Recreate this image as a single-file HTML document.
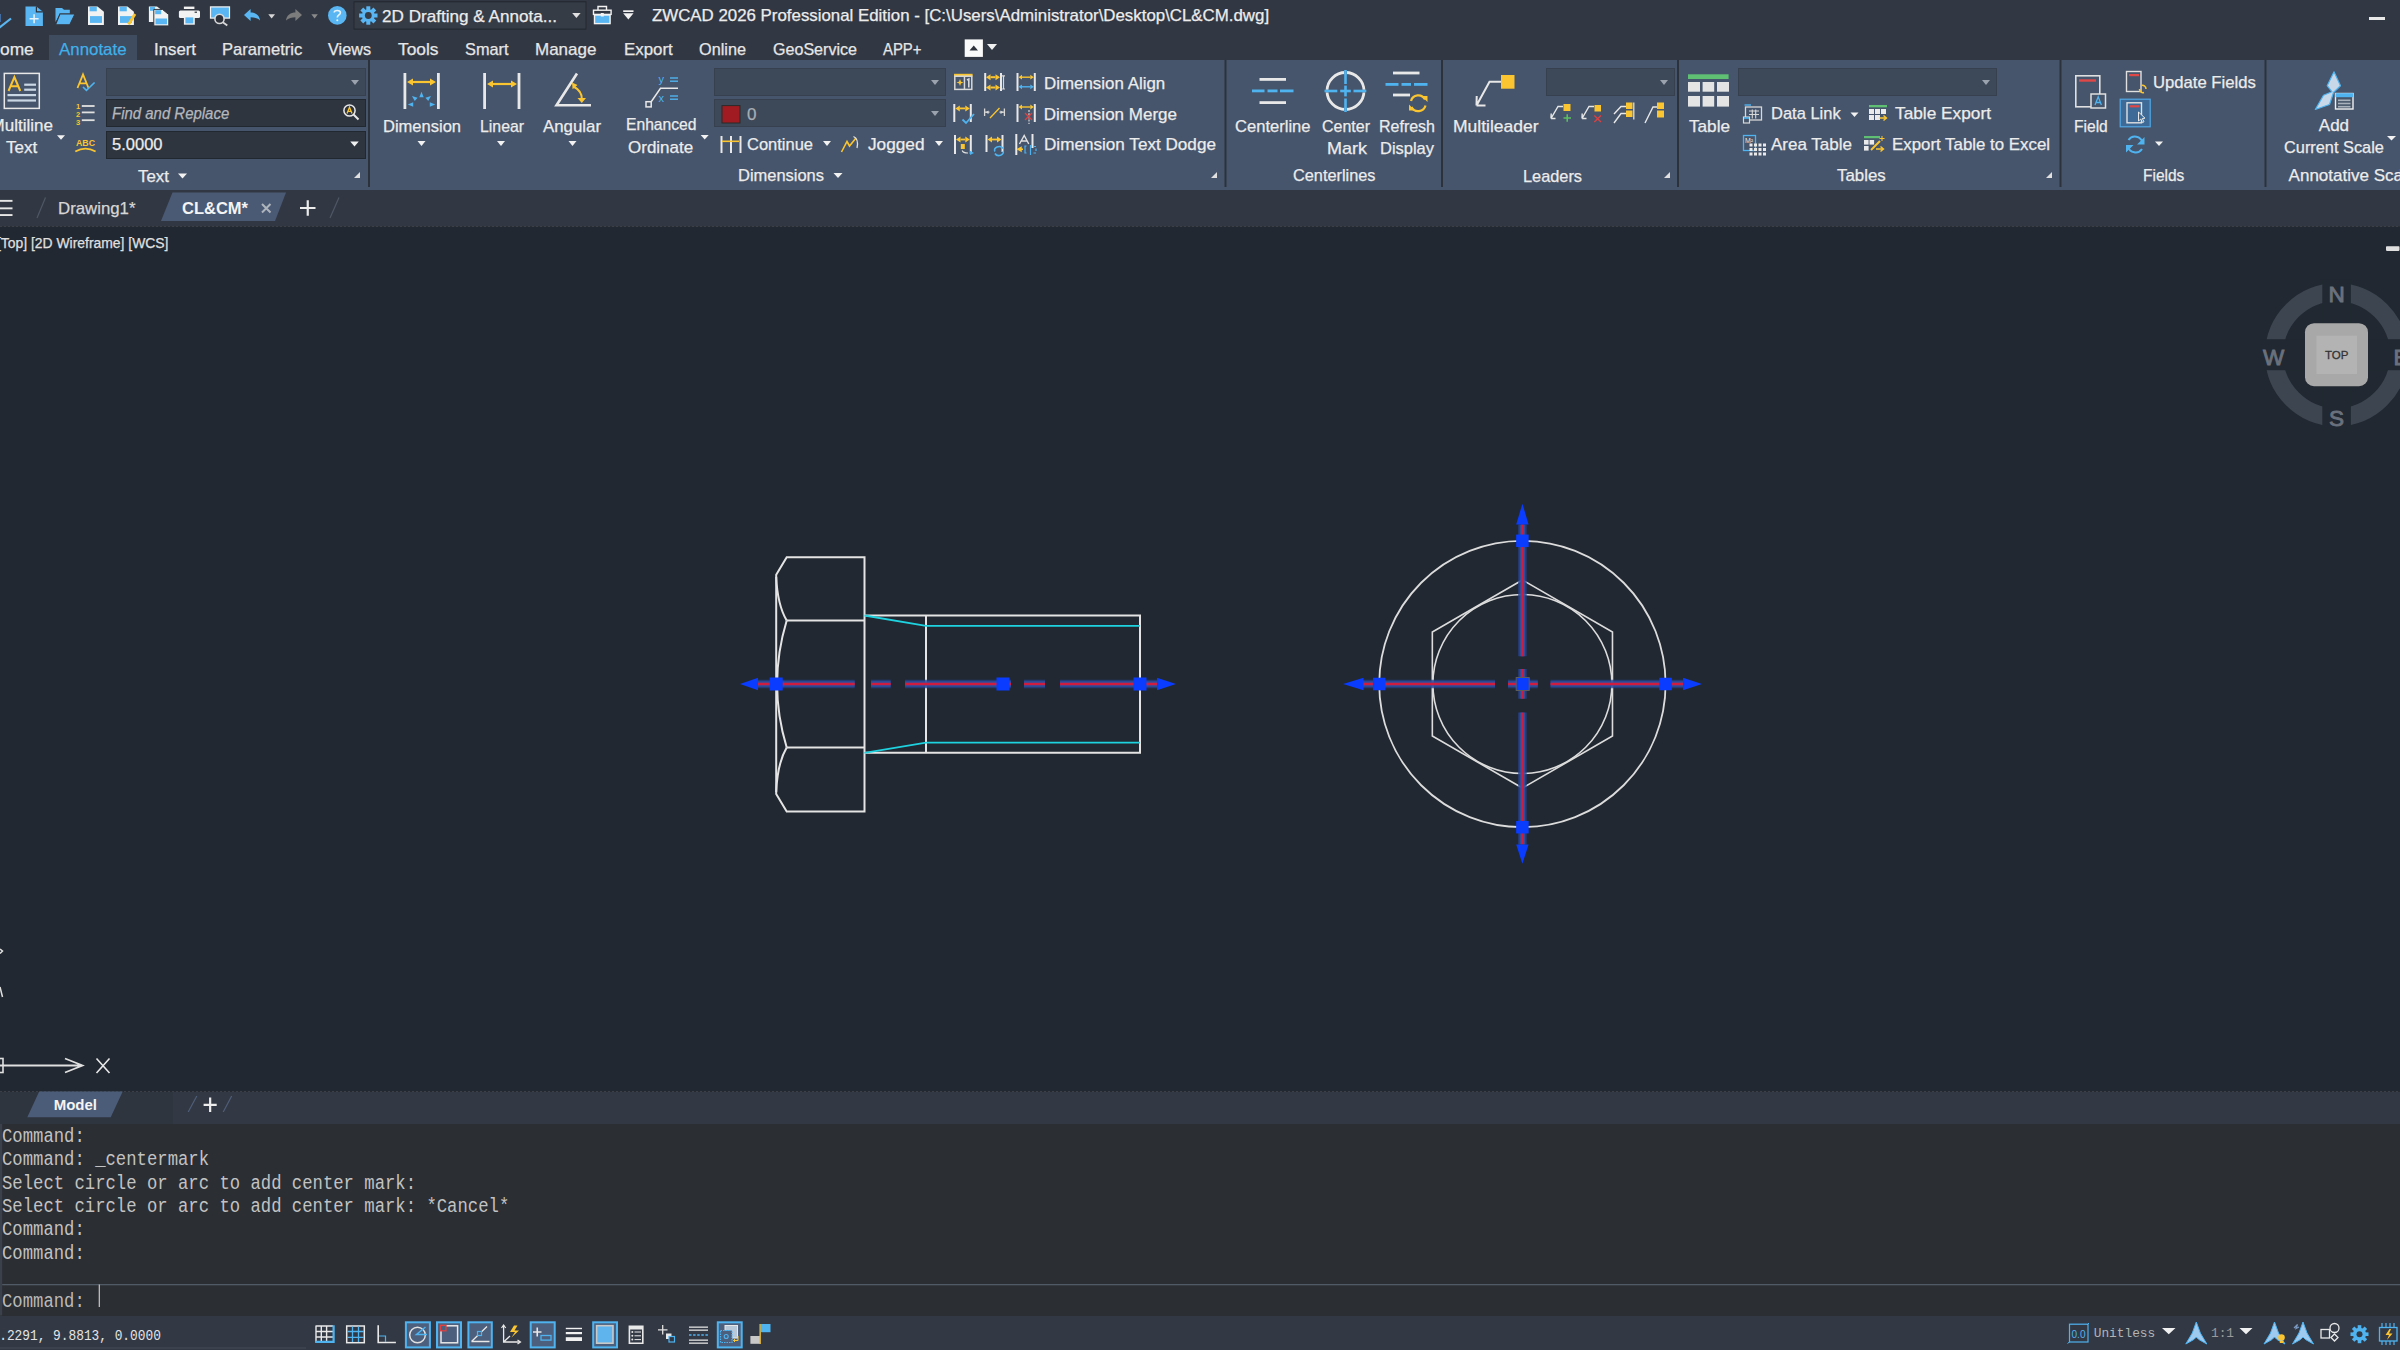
<!DOCTYPE html>
<html><head><meta charset="utf-8"><style>
html,body{margin:0;padding:0;width:2400px;height:1350px;overflow:hidden;background:#212831;}
body{position:relative;font-family:"Liberation Sans",sans-serif;}
body>div,body>svg{position:absolute;white-space:nowrap;}
</style></head><body>
<div style="left:0px;top:0px;width:2400px;height:60px;background:#323843;"></div>
<div style="left:0px;top:60px;width:2400px;height:130px;background:#46556b;"></div>
<div style="left:0px;top:190px;width:2400px;height:37px;background:#323843;"></div>
<div style="left:0px;top:227px;width:2400px;height:865px;background:#212831;"></div>
<div style="left:0px;top:1092px;width:2400px;height:32px;background:#323944;"></div>
<div style="left:0px;top:1124px;width:2400px;height:192px;background:#2b2e33;"></div>
<div style="left:0px;top:1316px;width:2400px;height:34px;background:#323945;"></div>
<svg style="left:0px;top:0px;" width="660" height="32" viewBox="0 0 660 32"><path d="M-1 28 L11 18.5" stroke="#5ab6f2" stroke-width="2.2" fill="none"/><path d="M0 14 L0 22" stroke="#4a7fc0" stroke-width="1.5"/><path d="M25.5 6.4 H36.4 L42.9 11.8 V26.1 H25.5 Z" fill="#5ab6f2"/><path d="M36.4 6.4 V11.8 H42.9" stroke="#2d323b" stroke-width="1.2" fill="none"/><path d="M29.6 18.75 H38.6 M34.1 14.3 V23.2" stroke="#e8f4fc" stroke-width="1.5"/><path d="M55.5 7.9 H62 L64 9.8 H69.8 V13.9 H60 L55.5 22 Z" fill="#5ab6f2"/><path d="M55.5 24.75 L60 13.9 H75 L69.8 24.75 Z" fill="#5ab6f2" stroke="#323843" stroke-width="1.1"/><path d="M88 6.4 H97.5 L103.9 11.8 V25.1 H88 Z" fill="#f2f2f2"/><rect x="89.6" y="6.8" width="7.2" height="4.5" fill="#5ab6f2"/><rect x="90" y="16.1" width="12" height="6.8" fill="#5ab6f2"/><path d="M118 6.4 H127.5 L133.9 11.8 V25.1 H118 Z" fill="#f2f2f2"/><rect x="119.6" y="6.8" width="7.2" height="4.5" fill="#5ab6f2"/><rect x="120" y="16.1" width="12" height="6.8" fill="#5ab6f2"/><path d="M128.6 24.5 L135 14" stroke="#fac530" stroke-width="2.8"/><path d="M148.9 6.4 H157 L161 9.5 V22 H148.9 Z" fill="#f2f2f2"/><rect x="150" y="6.8" width="5" height="4" fill="#5ab6f2"/><path d="M153.8 9.4 H162.5 L168.8 14.6 V25.9 H153.8 Z" fill="#f2f2f2" stroke="#2d323b" stroke-width="1"/><rect x="155.2" y="10.2" width="6" height="4" fill="#5ab6f2"/><rect x="155.5" y="18.5" width="11.5" height="5.8" fill="#5ab6f2"/><rect x="183.9" y="6.6" width="10.5" height="2.4" fill="#f2f2f2"/><rect x="178.9" y="10.5" width="21.1" height="7.6" rx="1.5" fill="#f2f2f2"/><rect x="183.9" y="16.1" width="10.9" height="8.6" fill="#f2f2f2"/><rect x="185.4" y="17.4" width="7.9" height="6" fill="#5ab6f2"/><rect x="194.6" y="11.6" width="2.4" height="1.2" fill="#2d323b"/><rect x="210.5" y="6.9" width="19" height="11.2" fill="#5ab6f2" stroke="#f2f2f2" stroke-width="1.2"/><circle cx="219.5" cy="18.9" r="4.6" fill="#2d323b" stroke="#d8d8d8" stroke-width="1.6"/><path d="M222.8 22.2 L227.3 25.5" stroke="#d8d8d8" stroke-width="1.8"/><path d="M244 15 L250.6 9 V12.5 C255 12.5 259.5 15 260 20.6 C257.5 18 254 17.3 250.6 17.3 V21 Z" fill="#5ab6f2"/><path d="M268.3 14.3 H275 L271.65 18.4 Z" fill="#d6d6d6"/><path d="M302 15 L295.4 9 V12.5 C291 12.5 286.5 15 286 20.6 C288.5 18 292 17.3 295.4 17.3 V21 Z" fill="#7c7c7c"/><path d="M311.4 14.3 H317.8 L314.6 18.4 Z" fill="#8a8a8a"/><circle cx="337.3" cy="15.4" r="9.3" fill="#5ab6f2"/><path d="M334.2 12.6 C334.2 9.8 340.4 9.6 340.4 12.7 C340.4 14.8 337.3 15 337.3 17.4" stroke="#e8f4fc" stroke-width="1.6" fill="none"/><circle cx="337.3" cy="20.2" r="1" fill="#e8f4fc"/><rect x="354" y="1.8" width="232" height="27.3" fill="#363c46" stroke="#22272e" stroke-width="1"/><g transform="translate(368.3 15.5)" fill="#5ab6f2"><rect x="-2" y="-9.2" width="4" height="5" transform="rotate(0)"/><rect x="-2" y="-9.2" width="4" height="5" transform="rotate(45)"/><rect x="-2" y="-9.2" width="4" height="5" transform="rotate(90)"/><rect x="-2" y="-9.2" width="4" height="5" transform="rotate(135)"/><rect x="-2" y="-9.2" width="4" height="5" transform="rotate(180)"/><rect x="-2" y="-9.2" width="4" height="5" transform="rotate(225)"/><rect x="-2" y="-9.2" width="4" height="5" transform="rotate(270)"/><rect x="-2" y="-9.2" width="4" height="5" transform="rotate(315)"/><circle r="6.3"/></g><circle cx="368.3" cy="15.5" r="3.4" fill="#363c46"/><path d="M572.2 12.9 H580.6 L576.4 18.1 Z" fill="#e0e0e0"/><path d="M598 10 V6.5 H606.5 V10" stroke="#f2f2f2" stroke-width="1.4" fill="none"/><rect x="593.5" y="10.2" width="17.6" height="4.2" fill="none" stroke="#f2f2f2" stroke-width="1.4"/><rect x="594.5" y="15" width="15.6" height="8.6" fill="#5ab6f2" stroke="#f2f2f2" stroke-width="1.4"/><rect x="600.8" y="13" width="3" height="3.5" fill="#f2f2f2"/><rect x="623.2" y="10.3" width="10.3" height="1.7" fill="#f2f2f2"/><path d="M623.2 13.2 H633.5 L628.35 19.4 Z" fill="#f2f2f2"/></svg>
<div style="left:382.30px;top:7.61px;font-size:17px;line-height:17px;color:#ececec;font-family:'Liberation Sans',sans-serif;-webkit-text-stroke:0.25px #ececec;transform:scaleX(1.0067);transform-origin:0 0;">2D Drafting &amp; Annota...</div>
<div style="left:651.75px;top:6.81px;font-size:17px;line-height:17px;color:#ececec;font-family:'Liberation Sans',sans-serif;-webkit-text-stroke:0.25px #ececec;transform:scaleX(0.9911);transform-origin:0 0;">ZWCAD 2026 Professional Edition - [C:\Users\Administrator\Desktop\CL&amp;CM.dwg]</div>
<div style="left:2368.5px;top:17px;width:16px;height:3px;background:#e8e8e8;"></div>
<div style="left:49px;top:35px;width:88px;height:25px;background:#3f4b5e;"></div>
<div style="left:0.00px;top:40.61px;font-size:17px;line-height:17px;color:#e6e6e6;font-family:'Liberation Sans',sans-serif;-webkit-text-stroke:0.25px #e6e6e6;transform:scaleX(1.0208);transform-origin:0 0;">ome</div>
<div style="left:59.25px;top:40.61px;font-size:17px;line-height:17px;color:#3fb0ea;font-family:'Liberation Sans',sans-serif;-webkit-text-stroke:0.25px #3fb0ea;transform:scaleX(0.9920);transform-origin:0 0;">Annotate</div>
<div style="left:153.75px;top:40.61px;font-size:17px;line-height:17px;color:#e6e6e6;font-family:'Liberation Sans',sans-serif;-webkit-text-stroke:0.25px #e6e6e6;transform:scaleX(0.9882);transform-origin:0 0;">Insert</div>
<div style="left:222.00px;top:40.61px;font-size:17px;line-height:17px;color:#e6e6e6;font-family:'Liberation Sans',sans-serif;-webkit-text-stroke:0.25px #e6e6e6;transform:scaleX(0.9766);transform-origin:0 0;">Parametric</div>
<div style="left:327.75px;top:40.61px;font-size:17px;line-height:17px;color:#e6e6e6;font-family:'Liberation Sans',sans-serif;-webkit-text-stroke:0.25px #e6e6e6;transform:scaleX(0.9546);transform-origin:0 0;">Views</div>
<div style="left:397.75px;top:40.61px;font-size:17px;line-height:17px;color:#e6e6e6;font-family:'Liberation Sans',sans-serif;-webkit-text-stroke:0.25px #e6e6e6;transform:scaleX(1.0205);transform-origin:0 0;">Tools</div>
<div style="left:465.25px;top:40.61px;font-size:17px;line-height:17px;color:#e6e6e6;font-family:'Liberation Sans',sans-serif;-webkit-text-stroke:0.25px #e6e6e6;transform:scaleX(0.9597);transform-origin:0 0;">Smart</div>
<div style="left:535.00px;top:40.61px;font-size:17px;line-height:17px;color:#e6e6e6;font-family:'Liberation Sans',sans-serif;-webkit-text-stroke:0.25px #e6e6e6;">Manage</div>
<div style="left:623.50px;top:40.61px;font-size:17px;line-height:17px;color:#e6e6e6;font-family:'Liberation Sans',sans-serif;-webkit-text-stroke:0.25px #e6e6e6;transform:scaleX(0.9924);transform-origin:0 0;">Export</div>
<div style="left:699.00px;top:40.61px;font-size:17px;line-height:17px;color:#e6e6e6;font-family:'Liberation Sans',sans-serif;-webkit-text-stroke:0.25px #e6e6e6;transform:scaleX(0.9564);transform-origin:0 0;">Online</div>
<div style="left:772.50px;top:40.61px;font-size:17px;line-height:17px;color:#e6e6e6;font-family:'Liberation Sans',sans-serif;-webkit-text-stroke:0.25px #e6e6e6;transform:scaleX(0.9458);transform-origin:0 0;">GeoService</div>
<div style="left:882.80px;top:40.61px;font-size:17px;line-height:17px;color:#e6e6e6;font-family:'Liberation Sans',sans-serif;-webkit-text-stroke:0.25px #e6e6e6;transform:scaleX(0.8759);transform-origin:0 0;">APP+</div>
<svg style="left:960px;top:36px;" width="42" height="24" viewBox="0 0 42 24"><rect x="4.7" y="3.4" width="18.2" height="17.5" fill="#fafafa"/><path d="M9.5 14.6 H18 L13.75 9.6 Z" fill="#2d323b"/><path d="M27 8 H37 L32 14 Z" fill="#f0f0f0"/></svg>
<svg style="left:0px;top:0px;" width="2400" height="190" viewBox="0 0 2400 190"><rect x="368" y="60" width="2" height="127" fill="#2b323c"/><rect x="1224.5" y="60" width="2" height="127" fill="#2b323c"/><rect x="1441" y="60" width="2" height="127" fill="#2b323c"/><rect x="1677" y="60" width="2" height="127" fill="#2b323c"/><rect x="2059.5" y="60" width="2" height="127" fill="#2b323c"/><rect x="2264.5" y="60" width="2" height="127" fill="#2b323c"/><path d="M354 178 H360 V172 Z" fill="#e0e0e0"/><path d="M1211 178 H1217 V172 Z" fill="#e0e0e0"/><path d="M1664 178 H1670 V172 Z" fill="#e0e0e0"/><path d="M2046 178 H2052 V172 Z" fill="#e0e0e0"/><rect x="4.3" y="73.4" width="35" height="35" fill="none" stroke="#e8e8e8" stroke-width="1.5"/><path d="M8.5 91 L14.4 77 L20.3 91 M10.5 86.2 H18.3" stroke="#fac530" stroke-width="2" fill="none"/><rect x="24.2" y="83.6" width="11.8" height="2.2" fill="#c9d6e4"/><rect x="24.2" y="88.6" width="11.8" height="2.2" fill="#c9d6e4"/><rect x="7.5" y="94" width="28.5" height="2.2" fill="#c9d6e4"/><rect x="7.5" y="99.4" width="28.5" height="2.2" fill="#c9d6e4"/><path d="M57.0 135.2 H65.0 L61 139.7 Z" fill="#f2f2f2"/><path d="M77.5 88 L83 74.3 L88.5 88 M79.5 83.3 H86.5" stroke="#fac530" stroke-width="1.8" fill="none"/><path d="M83 87 L86.4 90.3 L94.6 82.5" stroke="#4fb3f0" stroke-width="1.7" fill="none"/><text x="76" y="109" font-family="Liberation Sans" font-weight="bold" font-size="7.5" fill="#fac530">1</text><text x="76" y="117" font-family="Liberation Sans" font-weight="bold" font-size="7.5" fill="#fac530">2</text><text x="76" y="125" font-family="Liberation Sans" font-weight="bold" font-size="7.5" fill="#fac530">3</text><rect x="81.8" y="105.1" width="12.8" height="1.8" fill="#e0e0e0"/><rect x="81.8" y="111.5" width="12.8" height="1.8" fill="#e0e0e0"/><rect x="81.8" y="119.3" width="12.8" height="1.8" fill="#e0e0e0"/><text x="76" y="146" font-family="Liberation Sans" font-weight="bold" font-size="8.6" fill="#fac530" textLength="19" lengthAdjust="spacingAndGlyphs">ABC</text><path d="M75.3 151.6 Q85.5 145.5 95.6 151.6" stroke="#fac530" stroke-width="1.8" fill="none"/><rect x="106.5" y="68.5" width="259" height="27" fill="#3d4858" stroke="#36404e" stroke-width="1"/><path d="M351.0 80.0 H359.0 L355 85.0 Z" fill="#9aa3ae"/><rect x="106.5" y="99.5" width="259" height="27" fill="#2f353f" stroke="#222830" stroke-width="1"/><rect x="106.5" y="131.5" width="259" height="27" fill="#2f353f" stroke="#222830" stroke-width="1"/><path d="M350.25 141.5 H358.75 L354.5 146.5 Z" fill="#f0f0f0"/><circle cx="349.5" cy="110.5" r="5.6" fill="none" stroke="#e8e8e8" stroke-width="1.5"/><path d="M353.5 114.5 L358.5 119.5" stroke="#e8e8e8" stroke-width="2"/><path d="M347 113.5 L349.5 107.2 L352 113.5 M347.9 111.4 H351.1" stroke="#fac530" stroke-width="1.3" fill="none"/><rect x="403.5" y="73" width="2.8" height="36" fill="#e8e8e8"/><rect x="437" y="73" width="2.8" height="36" fill="#e8e8e8"/><path d="M413 80.9 H430 V83.1 H413 Z" fill="#fac530"/><path d="M407 82 L413 78.4 V85.6 Z M436 82 L430 78.4 V85.6 Z" fill="#fac530"/><path d="M0 -3.3 L2.2 2.2 H-2.2 Z" fill="#4fb3f0" transform="translate(421.5 95) rotate(0)"/><path d="M0 -3.3 L2.2 2.2 H-2.2 Z" fill="#4fb3f0" transform="translate(414.5 98) rotate(-50)"/><path d="M0 -3.3 L2.2 2.2 H-2.2 Z" fill="#4fb3f0" transform="translate(428.5 98) rotate(50)"/><path d="M0 -3.3 L2.2 2.2 H-2.2 Z" fill="#4fb3f0" transform="translate(411 104.5) rotate(-90)"/><path d="M0 -3.3 L2.2 2.2 H-2.2 Z" fill="#4fb3f0" transform="translate(432 104.5) rotate(90)"/><path d="M417.5 141 H425.5 L421.5 146 Z" fill="#f2f2f2"/><rect x="483.2" y="73" width="2.8" height="36" fill="#e8e8e8"/><rect x="517.6" y="73" width="2.8" height="36" fill="#e8e8e8"/><path d="M493 82.9 H511 V85.1 H493 Z" fill="#fac530"/><path d="M487 84 L493 80.4 V87.6 Z M517 84 L511 80.4 V87.6 Z" fill="#fac530"/><path d="M497.0 141 H505.0 L501 146 Z" fill="#f2f2f2"/><path d="M577 73.5 L556.5 105.2 H591" stroke="#e8e8e8" stroke-width="2.6" fill="none"/><path d="M573.5 86.5 Q582 91 581.8 99" stroke="#fac530" stroke-width="2" fill="none"/><path d="M572 82.5 L577.5 85 L572.6 89.2 Z M577.5 98 H586 L581.8 103 Z" fill="#fac530"/><path d="M568.5 141 H576.5 L572.5 146 Z" fill="#f2f2f2"/><rect x="646" y="101.7" width="5.2" height="5.2" fill="none" stroke="#e8e8e8" stroke-width="1.5"/><path d="M651.2 101.7 L660.5 88.3 H678" stroke="#e8e8e8" stroke-width="1.5" fill="none"/><text x="658.5" y="82.5" font-family="Liberation Sans" font-size="11" fill="#4fb3f0">y</text><text x="658.5" y="101.5" font-family="Liberation Sans" font-size="11" fill="#4fb3f0">x</text><rect x="670" y="77.3" width="8" height="1.4" fill="#4fb3f0"/><rect x="670" y="80.5" width="8" height="1.4" fill="#4fb3f0"/><rect x="670" y="95.3" width="8" height="1.4" fill="#4fb3f0"/><rect x="670" y="98.5" width="8" height="1.4" fill="#4fb3f0"/><rect x="714.5" y="68.5" width="231" height="27" fill="#3d4858" stroke="#36404e" stroke-width="1"/><path d="M931.0 80.0 H939.0 L935 85.0 Z" fill="#9aa3ae"/><rect x="714.5" y="99.5" width="231" height="27" fill="#3d4858" stroke="#36404e" stroke-width="1"/><path d="M931.0 111.0 H939.0 L935 116.0 Z" fill="#9aa3ae"/><rect x="722" y="105.6" width="18" height="17.4" fill="#a01c22" stroke="#2a2a2a" stroke-width="1"/><path d="M700.7 135 H708.7 L704.7 139.5 Z" fill="#f2f2f2"/><rect x="720.5" y="136" width="2" height="17" fill="#e8e8e8"/><rect x="730" y="136" width="2" height="17" fill="#e8e8e8"/><rect x="739.5" y="136" width="2" height="17" fill="#e8e8e8"/><rect x="722" y="140.5" width="17" height="1.6" fill="#fac530"/><path d="M823.0 141 H831.0 L827 146 Z" fill="#f2f2f2"/><path d="M841.5 152 L847 141.5 L849.5 146 L856 138" stroke="#fac530" stroke-width="1.6" fill="none"/><path d="M853.5 136.5 Q859 139 857 148" stroke="#e0e0e0" stroke-width="1.3" fill="none"/><path d="M935.0 141 H943.0 L939 146 Z" fill="#f2f2f2"/><rect x="954" y="73.8" width="18.6" height="2.8" fill="#fac530"/><rect x="954.8" y="76.2" width="17" height="13.2" fill="none" stroke="#d8d8d8" stroke-width="1.5"/><rect x="963.7" y="76.5" width="1.5" height="13" fill="#d8d8d8"/><path d="M960 79 L961.3 82.5 L960 86 L958.7 82.5 Z M956.5 82.5 L960 81.2 L963.5 82.5 L960 83.8 Z" fill="#fac530"/><path d="M967 80 L968.8 79 V87.5" stroke="#d8d8d8" stroke-width="1.6" fill="none"/><rect x="984.2" y="73" width="2" height="18" fill="#e8e8e8"/><rect x="1000" y="73" width="2" height="18" fill="#e8e8e8"/><path d="M990.5 76.2 H995.5 V78.2 H990.5 Z" fill="#fac530"/><path d="M986 77.2 L990.5 74.2 V80.2 Z M1000 77.2 L995.5 74.2 V80.2 Z" fill="#fac530"/><path d="M990.5 86.5 H995.5 V88.5 H990.5 Z" fill="#fac530"/><path d="M986 87.5 L990.5 84.5 V90.5 Z M1000 87.5 L995.5 84.5 V90.5 Z" fill="#fac530"/><path d="M1002 75.8 H1005 M1003.5 75.8 V89 M1002 89 H1005" stroke="#d8d8d8" stroke-width="1.2" fill="none"/><rect x="1016.5" y="73" width="2" height="18" fill="#e8e8e8"/><rect x="1033.8" y="73" width="2" height="18" fill="#e8e8e8"/><path d="M1022.0 76.5 H1030.3 V77.9 H1022.0 Z" fill="#fac530"/><path d="M1018.5 77.2 L1022.0 74.8 V79.60000000000001 Z M1033.8 77.2 L1030.3 74.8 V79.60000000000001 Z" fill="#fac530"/><path d="M1022.0 86.1 H1030.3 V87.5 H1022.0 Z" fill="#4fb3f0"/><path d="M1018.5 86.8 L1022.0 84.39999999999999 V89.2 Z M1033.8 86.8 L1030.3 84.39999999999999 V89.2 Z" fill="#4fb3f0"/><rect x="953.3" y="104" width="2" height="18" fill="#e8e8e8"/><rect x="969.8" y="104" width="2" height="18" fill="#e8e8e8"/><path d="M959.8 107.5 H965.3 V109.30000000000001 H959.8 Z" fill="#fac530"/><path d="M955.3 108.4 L959.8 105.4 V111.4 Z M969.8 108.4 L965.3 105.4 V111.4 Z" fill="#fac530"/><path d="M962.5 119.5 L966 123 L974 114" stroke="#4fb3f0" stroke-width="1.8" fill="none"/><path d="M984.6 108.5 V116 M1004.4 108.5 V116 M985 112.2 H989.5 M999.5 112.2 H1004" stroke="#d8d8d8" stroke-width="1.3" fill="none"/><path d="M985.5 112.2 L988.5 110.5 V114 Z M1003.5 112.2 L1000.5 110.5 V114 Z" fill="#d8d8d8"/><path d="M990 118 L999.5 108" stroke="#fac530" stroke-width="1.3"/><rect x="1016.5" y="104" width="2" height="18" fill="#e8e8e8"/><rect x="1033.8" y="104" width="2" height="18" fill="#e8e8e8"/><path d="M1022.0 106.3 H1030.3 V107.7 H1022.0 Z" fill="#fac530"/><path d="M1018.5 107 L1022.0 104.6 V109.4 Z M1033.8 107 L1030.3 104.6 V109.4 Z" fill="#fac530"/><path d="M1029 110 V124" stroke="#d8d8d8" stroke-width="1.2" stroke-dasharray="2 1.2"/><path d="M1025 113 L1032 120 M1032 113 L1025 120" stroke="#e04040" stroke-width="1.3"/><rect x="954" y="135" width="2" height="19" fill="#e8e8e8"/><rect x="969.8" y="135" width="2" height="19" fill="#e8e8e8"/><path d="M960.5 138.6 H965.3 V140.4 H960.5 Z" fill="#fac530"/><path d="M956 139.5 L960.5 136.5 V142.5 Z M969.8 139.5 L965.3 136.5 V142.5 Z" fill="#fac530"/><rect x="960.8" y="144" width="4" height="5" fill="#fac530"/><path d="M962.2 150.5 Q963 153 968 153" stroke="#e0e0e0" stroke-width="1.2" fill="none"/><path d="M970 150.8 L974 153 L970 155 Z" fill="#4fb3f0"/><rect x="985.5" y="135" width="2" height="17" fill="#e8e8e8"/><rect x="1001.5" y="135" width="2" height="17" fill="#e8e8e8"/><path d="M992.0 138.6 H997.0 V140.4 H992.0 Z" fill="#fac530"/><path d="M987.5 139.5 L992.0 136.5 V142.5 Z M1001.5 139.5 L997.0 136.5 V142.5 Z" fill="#fac530"/><path d="M995 151.5 A4 3 0 0 1 1003 148.5 M1003 151 A4 3 0 0 1 995 153.5" stroke="#4fb3f0" stroke-width="1.6" fill="none"/><rect x="1015.3" y="134" width="2" height="21" fill="#e8e8e8"/><rect x="1031.5" y="134" width="2" height="14" fill="#e8e8e8"/><path d="M1019.5 144 L1024.2 135.5 L1028.8 144 M1021 141 H1027.3" stroke="#e0e0e0" stroke-width="1.4" fill="none"/><path d="M1018 149.2 H1023 M1018 149.2 L1021 147.5 V151 Z" stroke="#fac530" stroke-width="1.5" fill="#fac530"/><path d="M1026.5 146 H1025 V153 H1026.5 M1030.5 145 V155 M1033.5 146.5 H1036 M1033.5 153 H1036 M1036 148.5 V151" stroke="#4fb3f0" stroke-width="1.2" fill="none"/><rect x="1259.5" y="78" width="26.5" height="2.8" fill="#e8e8e8"/><rect x="1259.5" y="101.2" width="26.5" height="2.8" fill="#e8e8e8"/><rect x="1252" y="89.5" width="12.5" height="2.8" fill="#4fb3f0"/><rect x="1267.5" y="89.5" width="10.0" height="2.8" fill="#4fb3f0"/><rect x="1280" y="89.5" width="13.5" height="2.8" fill="#4fb3f0"/><circle cx="1345.5" cy="91" r="18.5" fill="none" stroke="#e8e8e8" stroke-width="2.8"/><rect x="1344.2" y="70" width="2.8" height="11" fill="#465569"/><rect x="1344.2" y="101" width="2.8" height="11" fill="#465569"/><rect x="1324" y="89.8" width="10" height="2.6" fill="#465569"/><rect x="1357" y="89.8" width="10" height="2.6" fill="#465569"/><rect x="1344.2" y="70" width="2.6" height="14" fill="#4fb3f0"/><rect x="1344.2" y="98.5" width="2.6" height="13.5" fill="#4fb3f0"/><rect x="1344.2" y="85.6" width="2.6" height="10.8" fill="#4fb3f0"/><rect x="1324.5" y="89.7" width="12.8" height="2.6" fill="#4fb3f0"/><rect x="1353.5" y="89.7" width="12.8" height="2.6" fill="#4fb3f0"/><rect x="1340.2" y="89.7" width="10.6" height="2.6" fill="#4fb3f0"/><rect x="1393" y="71.6" width="26.5" height="2.8" fill="#e8e8e8"/><rect x="1393" y="93.6" width="17" height="2.8" fill="#e8e8e8"/><rect x="1385.5" y="83" width="13.0" height="2.8" fill="#4fb3f0"/><rect x="1401.5" y="83" width="9.5" height="2.8" fill="#4fb3f0"/><rect x="1414" y="83" width="13.5" height="2.8" fill="#4fb3f0"/><path d="M1411 101 A7.5 7.5 0 0 1 1425 99.5 M1425.5 105.5 A7.5 7.5 0 0 1 1411.5 107" stroke="#fac530" stroke-width="2.2" fill="none"/><path d="M1421.5 96 H1427.5 V102 Z M1415 110.5 H1409 V104.5 Z" fill="#fac530"/><rect x="1501" y="75" width="13.5" height="13.7" fill="#fac530"/><path d="M1501 81.8 H1489.5 L1476.5 105.5 M1476.5 105.5 H1485.5 M1476.5 105.5 L1476.7 96" stroke="#e8e8e8" stroke-width="2" fill="none"/><rect x="1546.5" y="68.5" width="128" height="27" fill="#3d4858" stroke="#36404e" stroke-width="1"/><path d="M1660.0 80.0 H1668.0 L1664 85.0 Z" fill="#9aa3ae"/><path d="M1563 106.5 H1558 L1551 118.5 M1551 118.5 H1555.5 M1551 118.5 L1551.2 113.5" stroke="#e8e8e8" stroke-width="1.4" fill="none"/><rect x="1563.5" y="104" width="7" height="7" fill="#fac530"/><path d="M1563.5 118 H1571 M1567.2 114.2 V121.8" stroke="#5cc060" stroke-width="1.5"/><path d="M1594 106.5 H1589 L1582 118.5 M1582 118.5 H1586.5 M1582 118.5 L1582.2 113.5" stroke="#e8e8e8" stroke-width="1.4" fill="none"/><rect x="1594.5" y="105" width="6.5" height="6.5" fill="#fac530"/><path d="M1594.3 115.5 L1601 122 M1601 115.5 L1594.3 122" stroke="#e04040" stroke-width="1.3"/><path d="M1626 106.5 H1621 L1614 114 M1626 113.5 H1621 L1614 123" stroke="#e8e8e8" stroke-width="1.4" fill="none"/><rect x="1626" y="102.5" width="6.5" height="6.5" fill="#fac530"/><rect x="1626" y="110.5" width="6.5" height="6.5" fill="#fac530"/><rect x="1633.2" y="102.5" width="1.2" height="17" fill="#e8e8e8"/><path d="M1657 107 H1653 L1645 123" stroke="#e8e8e8" stroke-width="1.4" fill="none"/><rect x="1657" y="102.5" width="7" height="6.5" fill="#fac530"/><rect x="1657" y="110.5" width="7" height="7" fill="#fac530"/><rect x="1688" y="74.3" width="40.6" height="4.7" fill="#5fc074"/><rect x="1688" y="82" width="12" height="9.700000000000003" fill="#e4e4e4"/><rect x="1702.6" y="82" width="11.600000000000136" height="9.700000000000003" fill="#e4e4e4"/><rect x="1717" y="82" width="12" height="9.700000000000003" fill="#e4e4e4"/><rect x="1688" y="96" width="12" height="10.599999999999994" fill="#e4e4e4"/><rect x="1702.6" y="96" width="11.600000000000136" height="10.599999999999994" fill="#e4e4e4"/><rect x="1717" y="96" width="12" height="10.599999999999994" fill="#e4e4e4"/><rect x="1738.5" y="68.5" width="258" height="27" fill="#3d4858" stroke="#36404e" stroke-width="1"/><path d="M1982.0 80.0 H1990.0 L1986 85.0 Z" fill="#9aa3ae"/><rect x="1745.5" y="107" width="16" height="13" fill="none" stroke="#d8d8d8" stroke-width="1.3"/><path d="M1749 111 H1759 M1749 114.5 H1759 M1752.3 109.5 V118.5 M1755.7 109.5 V118.5" stroke="#d8d8d8" stroke-width="1.1"/><rect x="1743.5" y="117" width="6" height="6" fill="#465569" stroke="#d8d8d8" stroke-width="1.2"/><path d="M1744 118 H1749" stroke="#4fb3f0" stroke-width="1.6"/><path d="M1744.5 105 H1751" stroke="#4fb3f0" stroke-width="1.4"/><path d="M1850.5 112.5 H1858.5 L1854.5 117.0 Z" fill="#f2f2f2"/><rect x="1869" y="105" width="18" height="2.3" fill="#5fc074"/><rect x="1869" y="109" width="5" height="5" fill="#eaeaea"/><rect x="1875" y="109" width="5" height="5" fill="#eaeaea"/><rect x="1881" y="109" width="5" height="5" fill="#eaeaea"/><rect x="1869" y="115" width="5" height="5" fill="#eaeaea"/><rect x="1875" y="115" width="5" height="5" fill="#eaeaea"/><path d="M1879.5 118 H1886 M1883.5 115.5 L1886.5 118 L1883.5 120.5" stroke="#fac530" stroke-width="1.4" fill="none"/><rect x="1743.5" y="135.5" width="12" height="15" fill="none" stroke="#4fb3f0" stroke-width="1.3"/><text x="1745" y="143" font-family="Liberation Sans" font-size="7" fill="#e8e8e8">M²</text><rect x="1749.5" y="143.5" width="3" height="3" fill="#eaeaea"/><rect x="1754" y="143.5" width="3" height="3" fill="#eaeaea"/><rect x="1758.5" y="143.5" width="3" height="3" fill="#eaeaea"/><rect x="1763" y="143.5" width="3" height="3" fill="#eaeaea"/><rect x="1749.5" y="148.0" width="3" height="3" fill="#eaeaea"/><rect x="1754" y="148.0" width="3" height="3" fill="#eaeaea"/><rect x="1758.5" y="148.0" width="3" height="3" fill="#eaeaea"/><rect x="1763" y="148.0" width="3" height="3" fill="#eaeaea"/><rect x="1749.5" y="152.5" width="3" height="3" fill="#eaeaea"/><rect x="1754" y="152.5" width="3" height="3" fill="#eaeaea"/><rect x="1758.5" y="152.5" width="3" height="3" fill="#eaeaea"/><rect x="1763" y="152.5" width="3" height="3" fill="#eaeaea"/><rect x="1864" y="136" width="16" height="2.2" fill="#5fc074"/><rect x="1864" y="140" width="4.6" height="4.6" fill="#eaeaea"/><rect x="1869.5" y="140" width="4.6" height="4.6" fill="#eaeaea"/><rect x="1864" y="146" width="4.6" height="4.6" fill="#eaeaea"/><path d="M1871 150 L1880 141" stroke="#fac530" stroke-width="2"/><path d="M1876 149 H1883 M1880.5 146.5 L1883.5 149 L1880.5 151.5" stroke="#fac530" stroke-width="1.4" fill="none"/><path d="M1882 136 V141 M1879.5 138.5 H1884.5" stroke="#fac530" stroke-width="1"/><rect x="2075.8" y="75.8" width="24" height="31" fill="none" stroke="#e0e0e0" stroke-width="1.6"/><rect x="2079" y="79.3" width="17" height="2.4" fill="#e04848"/><rect x="2091" y="94" width="14.5" height="14" fill="#465569" stroke="#e0e0e0" stroke-width="1.5"/><path d="M2095 105 L2098.2 96.8 L2101.4 105 M2096.2 102.5 H2100.2" stroke="#4fb3f0" stroke-width="1.3" fill="none"/><rect x="2126.5" y="71.5" width="14.5" height="20" fill="none" stroke="#e0e0e0" stroke-width="1.4"/><rect x="2129" y="74" width="10" height="2.2" fill="#e04848"/><path d="M2141.5 85.5 A3.5 3.5 0 0 1 2146 89 M2144 92.5 A3.5 3.5 0 0 1 2139.5 89" stroke="#fac530" stroke-width="1.5" fill="none"/><rect x="2120.2" y="99.2" width="30" height="27.6" fill="#3d6a96" stroke="#52a8e8" stroke-width="1.2"/><rect x="2127" y="102.8" width="14.5" height="20" fill="none" stroke="#e0e0e0" stroke-width="1.4"/><rect x="2129.5" y="105.2" width="10" height="2.2" fill="#e04848"/><path d="M2138.5 112 V121 L2140.8 119 L2142.5 122.5 L2144 121.8 L2142.3 118.5 L2145 118.2 Z" fill="#3d6a96" stroke="#e8e8e8" stroke-width="1"/><path d="M2142.5 142.5 A7.8 7.8 0 0 0 2128.5 140 M2128 146.5 A7.8 7.8 0 0 0 2142 149" stroke="#4fb3f0" stroke-width="2" fill="none"/><path d="M2144.5 137 V144.5 H2137 Z M2126 152.5 V145 H2133.5 Z" fill="#4fb3f0"/><path d="M2155.0 141.5 H2163.0 L2159 146.0 Z" fill="#f2f2f2"/><path d="M2334 71.8 L2340.5 85.7 L2333.5 92.5 L2329.5 104.5 L2315.3 109.5 L2323.5 95.3 L2332 91.8 L2327.2 85.7 Z" fill="#c8d8e8" stroke="#4fb3f0" stroke-width="1.2" stroke-linejoin="round"/><rect x="2335.5" y="93.5" width="17.5" height="15.5" fill="#465569" stroke="#f0f0f0" stroke-width="1.4"/><rect x="2335.5" y="93.2" width="17.5" height="4" fill="#4fb3f0"/><rect x="2338" y="99.5" width="12.5" height="1.6" fill="#a9b2bc"/><rect x="2338" y="102.7" width="12.5" height="1.6" fill="#a9b2bc"/><rect x="2338" y="105.9" width="12.5" height="1.6" fill="#a9b2bc"/><path d="M2387.0 136 H2396.0 L2391.5 140.5 Z" fill="#f2f2f2"/><path d="M178.0 173.5 H187.0 L182.5 178.5 Z" fill="#f2f2f2"/><path d="M833.5 173 H842.5 L838 178 Z" fill="#f2f2f2"/><rect x="2398.8" y="169" width="1.2" height="12" fill="#4a58b0"/></svg>
<div style="left:-9.40px;top:116.61px;font-size:17px;line-height:17px;color:#ececec;font-family:'Liberation Sans',sans-serif;-webkit-text-stroke:0.25px #ececec;">Multiline</div>
<div style="left:6.40px;top:138.91px;font-size:17px;line-height:17px;color:#ececec;font-family:'Liberation Sans',sans-serif;-webkit-text-stroke:0.25px #ececec;transform:scaleX(1.0041);transform-origin:0 0;">Text</div>
<div style="left:111.60px;top:104.83px;font-size:16.5px;line-height:16.5px;color:#b4b8be;font-family:'Liberation Sans',sans-serif;-webkit-text-stroke:0.25px #b4b8be;font-style:italic;transform:scaleX(0.9064);transform-origin:0 0;">Find and Replace</div>
<div style="left:112.00px;top:136.11px;font-size:17px;line-height:17px;color:#ececec;font-family:'Liberation Sans',sans-serif;-webkit-text-stroke:0.25px #ececec;transform:scaleX(0.9714);transform-origin:0 0;">5.0000</div>
<div style="left:138.00px;top:167.61px;font-size:17px;line-height:17px;color:#ececec;font-family:'Liberation Sans',sans-serif;-webkit-text-stroke:0.25px #ececec;transform:scaleX(0.9945);transform-origin:0 0;">Text</div>
<div style="left:382.50px;top:118.31px;font-size:17px;line-height:17px;color:#ececec;font-family:'Liberation Sans',sans-serif;-webkit-text-stroke:0.25px #ececec;transform:scaleX(0.9712);transform-origin:0 0;">Dimension</div>
<div style="left:480.00px;top:118.31px;font-size:17px;line-height:17px;color:#ececec;font-family:'Liberation Sans',sans-serif;-webkit-text-stroke:0.25px #ececec;transform:scaleX(0.9312);transform-origin:0 0;">Linear</div>
<div style="left:543.00px;top:118.31px;font-size:17px;line-height:17px;color:#ececec;font-family:'Liberation Sans',sans-serif;-webkit-text-stroke:0.25px #ececec;transform:scaleX(0.9899);transform-origin:0 0;">Angular</div>
<div style="left:625.50px;top:116.11px;font-size:17px;line-height:17px;color:#ececec;font-family:'Liberation Sans',sans-serif;-webkit-text-stroke:0.25px #ececec;transform:scaleX(0.9208);transform-origin:0 0;">Enhanced</div>
<div style="left:628.00px;top:138.61px;font-size:17px;line-height:17px;color:#ececec;font-family:'Liberation Sans',sans-serif;-webkit-text-stroke:0.25px #ececec;">Ordinate</div>
<div style="left:747.00px;top:105.61px;font-size:17px;line-height:17px;color:#a8aeb6;font-family:'Liberation Sans',sans-serif;-webkit-text-stroke:0.25px #a8aeb6;">0</div>
<div style="left:747.00px;top:136.21px;font-size:17px;line-height:17px;color:#ececec;font-family:'Liberation Sans',sans-serif;-webkit-text-stroke:0.25px #ececec;transform:scaleX(0.9699);transform-origin:0 0;">Continue</div>
<div style="left:867.50px;top:136.21px;font-size:17px;line-height:17px;color:#ececec;font-family:'Liberation Sans',sans-serif;-webkit-text-stroke:0.25px #ececec;transform:scaleX(1.0132);transform-origin:0 0;">Jogged</div>
<div style="left:738.00px;top:167.11px;font-size:17px;line-height:17px;color:#ececec;font-family:'Liberation Sans',sans-serif;-webkit-text-stroke:0.25px #ececec;transform:scaleX(0.9683);transform-origin:0 0;">Dimensions</div>
<div style="left:1043.75px;top:74.51px;font-size:17px;line-height:17px;color:#ececec;font-family:'Liberation Sans',sans-serif;-webkit-text-stroke:0.25px #ececec;transform:scaleX(0.9946);transform-origin:0 0;">Dimension Align</div>
<div style="left:1043.75px;top:105.61px;font-size:17px;line-height:17px;color:#ececec;font-family:'Liberation Sans',sans-serif;-webkit-text-stroke:0.25px #ececec;">Dimension Merge</div>
<div style="left:1043.75px;top:136.21px;font-size:17px;line-height:17px;color:#ececec;font-family:'Liberation Sans',sans-serif;-webkit-text-stroke:0.25px #ececec;transform:scaleX(1.0070);transform-origin:0 0;">Dimension Text Dodge</div>
<div style="left:1235.00px;top:118.11px;font-size:17px;line-height:17px;color:#ececec;font-family:'Liberation Sans',sans-serif;-webkit-text-stroke:0.25px #ececec;transform:scaleX(0.9744);transform-origin:0 0;">Centerline</div>
<div style="left:1322.00px;top:118.11px;font-size:17px;line-height:17px;color:#ececec;font-family:'Liberation Sans',sans-serif;-webkit-text-stroke:0.25px #ececec;transform:scaleX(0.9409);transform-origin:0 0;">Center</div>
<div style="left:1327.00px;top:140.11px;font-size:17px;line-height:17px;color:#ececec;font-family:'Liberation Sans',sans-serif;-webkit-text-stroke:0.25px #ececec;transform:scaleX(1.0592);transform-origin:0 0;">Mark</div>
<div style="left:1379.00px;top:118.11px;font-size:17px;line-height:17px;color:#ececec;font-family:'Liberation Sans',sans-serif;-webkit-text-stroke:0.25px #ececec;transform:scaleX(0.9409);transform-origin:0 0;">Refresh</div>
<div style="left:1380.00px;top:140.11px;font-size:17px;line-height:17px;color:#ececec;font-family:'Liberation Sans',sans-serif;-webkit-text-stroke:0.25px #ececec;transform:scaleX(0.9686);transform-origin:0 0;">Display</div>
<div style="left:1292.50px;top:167.11px;font-size:17px;line-height:17px;color:#ececec;font-family:'Liberation Sans',sans-serif;-webkit-text-stroke:0.25px #ececec;transform:scaleX(0.9595);transform-origin:0 0;">Centerlines</div>
<div style="left:1452.50px;top:118.01px;font-size:17px;line-height:17px;color:#ececec;font-family:'Liberation Sans',sans-serif;-webkit-text-stroke:0.25px #ececec;transform:scaleX(1.0284);transform-origin:0 0;">Multileader</div>
<div style="left:1523.00px;top:167.61px;font-size:17px;line-height:17px;color:#ececec;font-family:'Liberation Sans',sans-serif;-webkit-text-stroke:0.25px #ececec;transform:scaleX(0.9606);transform-origin:0 0;">Leaders</div>
<div style="left:1689.00px;top:117.91px;font-size:17px;line-height:17px;color:#ececec;font-family:'Liberation Sans',sans-serif;-webkit-text-stroke:0.25px #ececec;transform:scaleX(1.0088);transform-origin:0 0;">Table</div>
<div style="left:1771.00px;top:104.91px;font-size:17px;line-height:17px;color:#ececec;font-family:'Liberation Sans',sans-serif;-webkit-text-stroke:0.25px #ececec;transform:scaleX(0.9706);transform-origin:0 0;">Data Link</div>
<div style="left:1895.00px;top:104.91px;font-size:17px;line-height:17px;color:#ececec;font-family:'Liberation Sans',sans-serif;-webkit-text-stroke:0.25px #ececec;transform:scaleX(1.0160);transform-origin:0 0;">Table Export</div>
<div style="left:1771.00px;top:135.61px;font-size:17px;line-height:17px;color:#ececec;font-family:'Liberation Sans',sans-serif;-webkit-text-stroke:0.25px #ececec;">Area Table</div>
<div style="left:1892.00px;top:135.61px;font-size:17px;line-height:17px;color:#ececec;font-family:'Liberation Sans',sans-serif;-webkit-text-stroke:0.25px #ececec;transform:scaleX(0.9915);transform-origin:0 0;">Export Table to Excel</div>
<div style="left:1836.70px;top:166.91px;font-size:17px;line-height:17px;color:#ececec;font-family:'Liberation Sans',sans-serif;-webkit-text-stroke:0.25px #ececec;transform:scaleX(0.9910);transform-origin:0 0;">Tables</div>
<div style="left:2073.70px;top:117.61px;font-size:17px;line-height:17px;color:#ececec;font-family:'Liberation Sans',sans-serif;-webkit-text-stroke:0.25px #ececec;transform:scaleX(0.9170);transform-origin:0 0;">Field</div>
<div style="left:2152.70px;top:73.61px;font-size:17px;line-height:17px;color:#ececec;font-family:'Liberation Sans',sans-serif;-webkit-text-stroke:0.25px #ececec;transform:scaleX(0.9801);transform-origin:0 0;">Update Fields</div>
<div style="left:2142.70px;top:167.11px;font-size:17px;line-height:17px;color:#ececec;font-family:'Liberation Sans',sans-serif;-webkit-text-stroke:0.25px #ececec;transform:scaleX(0.9105);transform-origin:0 0;">Fields</div>
<div style="left:2318.80px;top:116.61px;font-size:17px;line-height:17px;color:#ececec;font-family:'Liberation Sans',sans-serif;-webkit-text-stroke:0.25px #ececec;">Add</div>
<div style="left:2283.50px;top:139.01px;font-size:17px;line-height:17px;color:#ececec;font-family:'Liberation Sans',sans-serif;-webkit-text-stroke:0.25px #ececec;transform:scaleX(0.9613);transform-origin:0 0;">Current Scale</div>
<div style="left:2288.60px;top:167.11px;font-size:17px;line-height:17px;color:#ececec;font-family:'Liberation Sans',sans-serif;-webkit-text-stroke:0.25px #ececec;">Annotative Scale</div>
<svg style="left:0px;top:185px;" width="2400" height="910" viewBox="0 0 2400 910"><g transform="translate(0 -185)"><rect x="0" y="199.9" width="12.5" height="1.9" fill="#e6e6e6"/><rect x="0" y="207.4" width="12.5" height="1.9" fill="#e6e6e6"/><rect x="0" y="214.1" width="12.5" height="1.9" fill="#e6e6e6"/><path d="M37 218 L45.5 197.5 M330 218 L339 197.5" stroke="#4f5765" stroke-width="1.2"/><path d="M161 221 L172.5 192.5 H286 L275 221 Z" fill="#4a5a75"/><path d="M262 204 L270.5 212.5 M270.5 204 L262 212.5" stroke="#aeb4bc" stroke-width="2"/><path d="M300 208 H315.5 M307.75 200.2 V215.8" stroke="#ececec" stroke-width="2.2"/><path d="M0 226.5 H2400" stroke="#2a2e35" stroke-width="1"/><path d="M0 226.5 H2400" stroke="#3a3f48" stroke-width="1" stroke-dasharray="2 2"/><path d="M0 1091.5 H2400" stroke="#262a30" stroke-width="1"/><path d="M0 1091.5 H2400" stroke="#3a3f48" stroke-width="1" stroke-dasharray="2 2"/><rect x="2386" y="246.3" width="13.5" height="4.6" fill="#e0e0e0" rx="0.8"/><circle cx="2336.6" cy="354.7" r="62.5" stroke="#3d4551" stroke-width="18" fill="none"/><rect x="2322.2999999999997" y="279.7" width="28.6" height="150" fill="#212831"/><rect x="2261.6" y="339.2" width="150" height="31" fill="#212831"/><rect x="2305" y="323.2" width="63" height="63" rx="9" fill="#a8a8a8"/><rect x="2316.5" y="335.7" width="40.5" height="38.3" fill="#b3b3b3"/><text x="2336.6" y="359.2" font-family="Liberation Sans" font-size="11.5" fill="#333333" stroke="#333333" stroke-width="0.3" text-anchor="middle">TOP</text><text x="2336.5" y="301.7" font-family="Liberation Sans" font-size="22.5" fill="#6a717c" stroke="#6a717c" stroke-width="0.9" text-anchor="middle">N</text><text x="2336.5" y="425.6" font-family="Liberation Sans" font-size="22.5" fill="#6a717c" stroke="#6a717c" stroke-width="0.9" text-anchor="middle">S</text><text x="2273.7" y="364.5" font-family="Liberation Sans" font-size="22.5" fill="#6a717c" stroke="#6a717c" stroke-width="0.9" text-anchor="middle">W</text><text x="2401" y="364.5" font-family="Liberation Sans" font-size="22.5" fill="#6a717c" stroke="#6a717c" stroke-width="0.9" text-anchor="middle">E</text><g stroke="#e4e4e4" stroke-width="2" fill="none" stroke-linejoin="miter"><path d="M786.7 557.3 H864.5 V811.5 H786.7 L776.2 794 V574.7 Z"/><path d="M786.7 620.5 H864.5 M786.7 747.5 H864.5"/><path d="M776.2 577 Q777.5 605 786.7 620.5"/><path d="M786.7 620.5 Q767.5 684 786.7 747.5"/><path d="M786.7 747.5 Q777.5 763 776.2 792"/><path d="M864.5 615.5 H1140 V752.8 H864.5"/><path d="M926 615.5 V752.8"/></g><path d="M864.5 615.5 L926 625.9 H1140 M864.5 752.8 L926 742.7 H1140" stroke="#1ed2e0" stroke-width="1.8" fill="none"/><path d="M757 684 H854.7" stroke="#27418a" stroke-width="8.6" opacity="0.75"/><path d="M871 684 H890.7" stroke="#27418a" stroke-width="8.6" opacity="0.75"/><path d="M905 684 H1011" stroke="#27418a" stroke-width="8.6" opacity="0.75"/><path d="M1024 684 H1045" stroke="#27418a" stroke-width="8.6" opacity="0.75"/><path d="M1060 684 H1157" stroke="#27418a" stroke-width="8.6" opacity="0.75"/><path d="M757 684 H854.7" stroke="#3553a8" stroke-width="5.6" opacity="0.8"/><path d="M871 684 H890.7" stroke="#3553a8" stroke-width="5.6" opacity="0.8"/><path d="M905 684 H1011" stroke="#3553a8" stroke-width="5.6" opacity="0.8"/><path d="M1024 684 H1045" stroke="#3553a8" stroke-width="5.6" opacity="0.8"/><path d="M1060 684 H1157" stroke="#3553a8" stroke-width="5.6" opacity="0.8"/><path d="M757 684 H854.7" stroke="#d01c3e" stroke-width="2.4" opacity="1"/><path d="M871 684 H890.7" stroke="#d01c3e" stroke-width="2.4" opacity="1"/><path d="M905 684 H1011" stroke="#d01c3e" stroke-width="2.4" opacity="1"/><path d="M1024 684 H1045" stroke="#d01c3e" stroke-width="2.4" opacity="1"/><path d="M1060 684 H1157" stroke="#d01c3e" stroke-width="2.4" opacity="1"/><rect x="769.7" y="677.5" width="13" height="13" fill="#0a3cff"/><rect x="996.5" y="677.5" width="13" height="13" fill="#0a3cff"/><rect x="1133.5" y="677.5" width="13" height="13" fill="#0a3cff"/><path d="M740 684 L758 677.8 V690.2 Z M1176 684 L1157 677.8 V690.2 Z" fill="#0a3cff"/><circle cx="1522.4" cy="684" r="143.2" stroke="#dcdcdc" stroke-width="1.8" fill="none"/><circle cx="1522.4" cy="684" r="89.5" stroke="#dcdcdc" stroke-width="1.6" fill="none"/><polygon points="1522.40,580.00 1612.47,632.00 1612.47,736.00 1522.40,788.00 1432.33,736.00 1432.33,632.00" stroke="#dcdcdc" stroke-width="1.6" fill="none"/><path d="M1363 684 H1495" stroke="#27418a" stroke-width="8.6" opacity="0.75"/><path d="M1508 684 H1537.8" stroke="#27418a" stroke-width="8.6" opacity="0.75"/><path d="M1550.5 684 H1683" stroke="#27418a" stroke-width="8.6" opacity="0.75"/><path d="M1363 684 H1495" stroke="#3553a8" stroke-width="5.6" opacity="0.8"/><path d="M1508 684 H1537.8" stroke="#3553a8" stroke-width="5.6" opacity="0.8"/><path d="M1550.5 684 H1683" stroke="#3553a8" stroke-width="5.6" opacity="0.8"/><path d="M1363 684 H1495" stroke="#d01c3e" stroke-width="2.4" opacity="1"/><path d="M1508 684 H1537.8" stroke="#d01c3e" stroke-width="2.4" opacity="1"/><path d="M1550.5 684 H1683" stroke="#d01c3e" stroke-width="2.4" opacity="1"/><path d="M1522.4 524.4 V656.3" stroke="#27418a" stroke-width="8.6" opacity="0.75"/><path d="M1522.4 669 V698.7" stroke="#27418a" stroke-width="8.6" opacity="0.75"/><path d="M1522.4 712.6 V844.4" stroke="#27418a" stroke-width="8.6" opacity="0.75"/><path d="M1522.4 524.4 V656.3" stroke="#3553a8" stroke-width="5.6" opacity="0.8"/><path d="M1522.4 669 V698.7" stroke="#3553a8" stroke-width="5.6" opacity="0.8"/><path d="M1522.4 712.6 V844.4" stroke="#3553a8" stroke-width="5.6" opacity="0.8"/><path d="M1522.4 524.4 V656.3" stroke="#d01c3e" stroke-width="2.4" opacity="1"/><path d="M1522.4 669 V698.7" stroke="#d01c3e" stroke-width="2.4" opacity="1"/><path d="M1522.4 712.6 V844.4" stroke="#d01c3e" stroke-width="2.4" opacity="1"/><rect x="1372.95" y="677.75" width="12.5" height="12.5" fill="#0a3cff"/><rect x="1659.35" y="677.75" width="12.5" height="12.5" fill="#0a3cff"/><rect x="1516.15" y="534.55" width="12.5" height="12.5" fill="#0a3cff"/><rect x="1516.15" y="820.95" width="12.5" height="12.5" fill="#0a3cff"/><rect x="1516.2" y="677.5" width="13" height="13" fill="#0a3cff" stroke="#5c5c5c" stroke-width="1"/><path d="M1343 684 L1363.5 677.8 V690.2 Z M1702 684 L1683 677.8 V690.2 Z M1522.4 503.7 L1516.2 524.4 H1528.6000000000001 Z M1522.4 863.7 L1516.2 844.4 H1528.6000000000001 Z" fill="#0a3cff"/><path d="M0 1065.5 H82.5 M65 1058.5 L82.5 1065.5 L65 1072.5" stroke="#e0e0e0" stroke-width="1.8" fill="none"/><rect x="-2" y="1058.5" width="5" height="14" fill="none" stroke="#e0e0e0" stroke-width="1.6"/><path d="M96.5 1058.5 L109.5 1073 M109.5 1058.5 L96.5 1073" stroke="#e8e8e8" stroke-width="1.6"/><path d="M0 949 L2.5 951 L0 953.5 M0 987 L2.5 997" stroke="#e0e0e0" stroke-width="1.5" fill="none"/></g></svg>
<div style="left:57.50px;top:200.31px;font-size:17px;line-height:17px;color:#d6d6d6;font-family:'Liberation Sans',sans-serif;-webkit-text-stroke:0.25px #d6d6d6;transform:scaleX(0.9882);transform-origin:0 0;">Drawing1*</div>
<div style="left:182.00px;top:200.31px;font-size:17px;line-height:17px;color:#f4f4f4;font-family:'Liberation Sans',sans-serif;font-weight:bold;transform:scaleX(0.9706);transform-origin:0 0;">CL&amp;CM*</div>
<div style="left:-3.50px;top:234.88px;font-size:15.5px;line-height:15.5px;color:#e0e0e0;font-family:'Liberation Sans',sans-serif;-webkit-text-stroke:0.25px #e0e0e0;transform:scaleX(0.8967);transform-origin:0 0;">[Top] [2D Wireframe] [WCS]</div>
<svg style="left:0px;top:1085px;" width="2400" height="265" viewBox="0 0 2400 265"><g transform="translate(0 -1085)"><rect x="0" y="1096.8999999999999" width="6.5" height="1.9" fill="#e6e6e6"/><rect x="0" y="1102.6999999999998" width="6.5" height="1.9" fill="#e6e6e6"/><rect x="0" y="1108.3999999999999" width="6.5" height="1.9" fill="#e6e6e6"/><rect x="0" y="1092" width="173" height="32" fill="#2f353f"/><path d="M27.3 1117.2 L39.2 1091.6 H122.7 L110.7 1117.2 Z" fill="#4b5c79"/><path d="M188.2 1112 L196.8 1096 M223.2 1112 L231.7 1096" stroke="#4f5d78" stroke-width="1.2"/><path d="M203.6 1104.8 H216.7 M210.15 1097.6 V1112" stroke="#ececec" stroke-width="2.2"/><rect x="0" y="1124" width="2.2" height="191.5" fill="#3b414a"/><rect x="2.2" y="1284" width="2398" height="1.3" fill="#505a66"/><rect x="98.7" y="1284.5" width="1.2" height="22.5" fill="#c8c8c8"/><rect x="0" y="1347.5" width="306" height="1" fill="#454c58"/><g stroke="#e8e8e8" stroke-width="1.4" fill="none"><path d="M316 1326 V1342.5 M321.3 1326 V1342.5 M326.6 1326 V1342.5 M315.5 1326 H333 M315.5 1331.5 H333 M315.5 1337 H333"/></g><path d="M315.2 1341.8 H333.6 V1325.3" stroke="#4fb3f0" stroke-width="2.2" fill="none"/><rect x="346.7" y="1326" width="17.6" height="16.7" fill="none" stroke="#e8e8e8" stroke-width="1.5"/><path d="M352.5 1326.5 V1342 M358.5 1326.5 V1342 M347 1331.5 H364 M347 1337.3 H364" stroke="#4fb3f0" stroke-width="1.3"/><path d="M378.2 1325.3 V1342.5 H395.9" stroke="#e8e8e8" stroke-width="1.6" fill="none"/><path d="M379 1336 H385.5 V1342" stroke="#4fb3f0" stroke-width="1.2" fill="none"/><rect x="405.9" y="1322.3" width="24.0" height="25.1" fill="#4c5f7c" stroke="#4fb3f0" stroke-width="2"/><circle cx="417.5" cy="1335" r="7.8" fill="none" stroke="#e0e0e0" stroke-width="1.5"/><path d="M425.5 1327 L416.5 1334.5 H427" stroke="#4fb3f0" stroke-width="1.5" fill="none"/><rect x="437" y="1322.3" width="24" height="25.1" fill="#4c5f7c" stroke="#4fb3f0" stroke-width="2"/><rect x="441" y="1325.8" width="16.6" height="17" fill="none" stroke="#e8e8e8" stroke-width="1.5"/><rect x="440.5" y="1325.3" width="5.5" height="5.5" fill="#4c5f7c" stroke="#e04040" stroke-width="1.3"/><rect x="468.4" y="1322.3" width="23.400000000000034" height="25.1" fill="#4c5f7c" stroke="#4fb3f0" stroke-width="2"/><path d="M471.5 1341.5 H489.5 M471.5 1341.5 L487 1326.5" stroke="#e8e8e8" stroke-width="1.3" fill="none"/><rect x="477.5" y="1331.5" width="4" height="4" fill="#4c5f7c" stroke="#4fb3f0" stroke-width="1.2"/><path d="M503.6 1325.5 V1342 H520 M503.6 1342 L510 1336" stroke="#e8e8e8" stroke-width="1.3" fill="none"/><path d="M501.5 1328 L503.6 1325 L505.7 1328 M517.5 1340 L520.5 1342 L517.5 1344" stroke="#e8e8e8" stroke-width="1.2" fill="none"/><path d="M514 1325.5 L510 1332 H515 L511.5 1337.5 L519 1330.5 H514.5 L517.5 1325.5 Z" fill="#fac530"/><rect x="530.7" y="1322.3" width="24.0" height="25.1" fill="#4c5f7c" stroke="#4fb3f0" stroke-width="2"/><path d="M533 1332 H541.5 M537.25 1327.5 V1336.5" stroke="#e8e8e8" stroke-width="1.6"/><rect x="541" y="1335.5" width="10" height="4.6" fill="none" stroke="#4fb3f0" stroke-width="1.3"/><rect x="565.8" y="1327.8" width="16.2" height="1.4" fill="#f0f0f0"/><rect x="565.8" y="1332" width="16.2" height="2.2" fill="#f0f0f0"/><rect x="565.8" y="1337.2" width="16.2" height="3.8" fill="#f0f0f0"/><rect x="593.2" y="1322.3" width="23.799999999999955" height="25.1" fill="#4c5f7c" stroke="#4fb3f0" stroke-width="2"/><rect x="596.6" y="1325.7" width="16.4" height="17.5" fill="#5fb4ee" stroke="#c8c8c8" stroke-width="1.6"/><rect x="628.6" y="1325.5" width="15" height="18.5" fill="#e8e8e8"/><rect x="630.2" y="1329.5" width="11.8" height="13" fill="#323945"/><circle cx="632.3" cy="1332" r="1" fill="#e8e8e8"/><circle cx="632.3" cy="1335.8" r="1" fill="#e8e8e8"/><circle cx="632.3" cy="1339.6" r="1" fill="#e8e8e8"/><path d="M634.5 1332 H641 M634.5 1335.8 H641 M634.5 1339.6 H641" stroke="#e8e8e8" stroke-width="1"/><path d="M658 1329.8 H667.5 M662.7 1325 V1334.5" stroke="#e0e0e0" stroke-width="1.3"/><rect x="666" y="1333.5" width="5.5" height="5.5" fill="#e8e8e8"/><rect x="669" y="1336.5" width="5.5" height="5.5" fill="#323945" stroke="#4fb3f0" stroke-width="1.2"/><rect x="689" y="1326.5" width="19" height="1.3" fill="#e0e0e0"/><rect x="689" y="1329.5" width="19" height="1.3" fill="#e0e0e0"/><path d="M689 1335 H708" stroke="#4fb3f0" stroke-width="1.4" stroke-dasharray="2.5 1.6"/><rect x="689" y="1339.5" width="19" height="1.3" fill="#e0e0e0"/><rect x="689" y="1342.5" width="19" height="1.3" fill="#e0e0e0"/><rect x="717.8" y="1322.3" width="23.90000000000009" height="25.1" fill="#4c5f7c" stroke="#4fb3f0" stroke-width="2"/><rect x="725" y="1325.5" width="12.5" height="12.5" fill="#b8c8d8" stroke="#e8e8e8" stroke-width="1"/><rect x="720.5" y="1330.5" width="11.5" height="12" fill="#4c5f7c" stroke="#4fb3f0" stroke-width="1.2" stroke-dasharray="1.5 1"/><circle cx="726.2" cy="1336.5" r="2" fill="none" stroke="#4fb3f0" stroke-width="1.1"/><path d="M738 1336 V1340.5 H733.5 M735 1339 L733.5 1340.5 L735 1342" stroke="#fac530" stroke-width="1" fill="none"/><rect x="750.4" y="1336" width="9.5" height="7.8" fill="#c8c8c8"/><rect x="759.5" y="1324" width="1.3" height="20" fill="#fac530"/><rect x="760.8" y="1324" width="9.7" height="8.2" fill="#4fb3f0"/><rect x="2069.5" y="1324.2" width="18.5" height="17.8" fill="none" stroke="#4fb3f0" stroke-width="1.2"/><text x="2071.5" y="1337.5" font-family="Liberation Sans" font-size="11" fill="#4fb3f0" textLength="14" lengthAdjust="spacingAndGlyphs">0.0</text><path d="M2067.5 1343.5 L2070 1341.5 M2089 1323 L2087 1325" stroke="#4fb3f0" stroke-width="1"/><path d="M2162 1328 H2175.5 L2168.75 1334.2 Z M2239.5 1328 H2252.5 L2246 1334.2 Z" fill="#f0f0f0"/><path d="M2196.3 1322 L2200.3 1333 L2206.8 1344 L2198.8 1339.5 L2196.3 1337 L2193.8 1339.5 L2185.8 1344 L2192.3 1333 Z" fill="#9fcaf0" stroke="#4fb3f0" stroke-width="1"/><path d="M2274.5 1322 L2278.5 1333 L2285.0 1344 L2277.0 1339.5 L2274.5 1337 L2272.0 1339.5 L2264.0 1344 L2270.5 1333 Z" fill="#9fcaf0" stroke="#4fb3f0" stroke-width="1"/><circle cx="2281.5" cy="1337.5" r="3.3" fill="#fac530"/><rect x="2279.8" y="1341" width="3.4" height="2" fill="#fac530"/><path d="M2303 1322 L2307 1333 L2313.5 1344 L2305.5 1339.5 L2303 1337 L2300.5 1339.5 L2292.5 1344 L2299 1333 Z" fill="#9fcaf0" stroke="#4fb3f0" stroke-width="1"/><path d="M2294 1328 L2297.5 1324.5 L2296 1328.5 L2299 1327" stroke="#7a98c0" stroke-width="1.2" fill="none"/><rect x="2321" y="1329.5" width="8.5" height="8.5" fill="none" stroke="#e8e8e8" stroke-width="1.3"/><circle cx="2334.5" cy="1328" r="4.5" fill="#323945" stroke="#e8e8e8" stroke-width="1.3"/><path d="M2331 1337.5 L2334.5 1334 L2338 1337.5 L2334.5 1341 Z" fill="#323945" stroke="#e8e8e8" stroke-width="1.3"/><g transform="translate(2359.5 1334.2)" fill="#4fb3f0"><rect x="-1.8" y="-9" width="3.6" height="4.5" transform="rotate(0)"/><rect x="-1.8" y="-9" width="3.6" height="4.5" transform="rotate(45)"/><rect x="-1.8" y="-9" width="3.6" height="4.5" transform="rotate(90)"/><rect x="-1.8" y="-9" width="3.6" height="4.5" transform="rotate(135)"/><rect x="-1.8" y="-9" width="3.6" height="4.5" transform="rotate(180)"/><rect x="-1.8" y="-9" width="3.6" height="4.5" transform="rotate(225)"/><rect x="-1.8" y="-9" width="3.6" height="4.5" transform="rotate(270)"/><rect x="-1.8" y="-9" width="3.6" height="4.5" transform="rotate(315)"/><circle r="6.5"/></g><circle cx="2359.5" cy="1334.2" r="3" fill="#323945"/><rect x="2379.5" y="1327.5" width="17.5" height="13.5" fill="none" stroke="#4fb3f0" stroke-width="1.3"/><path d="M2382 1323 V1327 M2386 1323 V1327 M2390 1323 V1327 M2394 1323 V1327 M2382 1341 V1345 M2386 1341 V1345 M2390 1341 V1345 M2394 1341 V1345" stroke="#4fb3f0" stroke-width="1.2"/><path d="M2389.5 1329 L2385.5 1335 H2389 L2387 1340 L2392.5 1333.5 H2389 L2391 1329 Z" fill="#fac530"/></g></svg>
<div style="left:53.70px;top:1096.60px;font-size:15px;line-height:15px;color:#f4f4f4;font-family:'Liberation Sans',sans-serif;font-weight:bold;">Model</div>
<div style="left:2.00px;top:1128.98px;font-size:17.25px;line-height:17.25px;color:#c2c2c2;font-family:'Liberation Mono',monospace;transform:scaleY(1.18);transform-origin:0 14px;">Command:</div>
<div style="left:2.00px;top:1152.31px;font-size:17.25px;line-height:17.25px;color:#c2c2c2;font-family:'Liberation Mono',monospace;transform:scaleY(1.18);transform-origin:0 14px;">Command: _centermark</div>
<div style="left:2.00px;top:1175.64px;font-size:17.25px;line-height:17.25px;color:#c2c2c2;font-family:'Liberation Mono',monospace;transform:scaleY(1.18);transform-origin:0 14px;">Select circle or arc to add center mark:</div>
<div style="left:2.00px;top:1198.97px;font-size:17.25px;line-height:17.25px;color:#c2c2c2;font-family:'Liberation Mono',monospace;transform:scaleY(1.18);transform-origin:0 14px;">Select circle or arc to add center mark: *Cancel*</div>
<div style="left:2.00px;top:1222.30px;font-size:17.25px;line-height:17.25px;color:#c2c2c2;font-family:'Liberation Mono',monospace;transform:scaleY(1.18);transform-origin:0 14px;">Command:</div>
<div style="left:2.00px;top:1245.63px;font-size:17.25px;line-height:17.25px;color:#c2c2c2;font-family:'Liberation Mono',monospace;transform:scaleY(1.18);transform-origin:0 14px;">Command:</div>
<div style="left:2.00px;top:1293.78px;font-size:17.25px;line-height:17.25px;color:#bababa;font-family:'Liberation Mono',monospace;transform:scaleY(1.18);transform-origin:0 14px;">Command:</div>
<div style="left:-0.80px;top:1330.97px;font-size:12.83px;line-height:12.83px;color:#e4e4e4;font-family:'Liberation Mono',monospace;transform:scaleY(1.12);transform-origin:0 10px;">.2291, 9.8813, 0.0000</div>
<div style="left:2093.75px;top:1328.19px;font-size:12.8px;line-height:12.8px;color:#b4b4b4;font-family:'Liberation Mono',monospace;">Unitless</div>
<div style="left:2211.00px;top:1328.19px;font-size:12.8px;line-height:12.8px;color:#9a9a9a;font-family:'Liberation Mono',monospace;">1:1</div>
</body></html>
